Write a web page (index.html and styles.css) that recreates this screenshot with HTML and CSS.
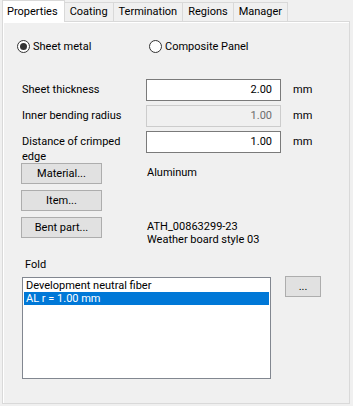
FILE: index.html
```html
<!DOCTYPE html>
<html lang="en">
<head>
    <meta charset="UTF-8">
    <title>Properties</title>
    <link rel="stylesheet" href="styles.css">
</head>
<body>
    <div class="tabs">
        <div class="tab active">Properties</div>
        <div class="tab">Coating</div>
        <div class="tab">Termination</div>
        <div class="tab">Regions</div>
        <div class="tab">Manager</div>
    </div>

    <div class="panel">
        <!-- Type -->
        <div class="radios">
            <label class="radio"><span class="dot checked"></span>Sheet metal</label>
            <label class="radio"><span class="dot"></span>Composite Panel</label>
        </div>

        <!-- Values -->
        <div class="fields">
            <div class="field">
                <span class="label">Sheet thickness</span>
                <input class="num" type="text" value="2.00">
                <span class="unit">mm</span>
            </div>
            <div class="field">
                <span class="label">Inner bending radius</span>
                <input class="num" type="text" value="1.00" disabled>
                <span class="unit">mm</span>
            </div>
            <div class="field">
                <span class="label">Distance of crimped edge</span>
                <input class="num" type="text" value="1.00">
                <span class="unit">mm</span>
            </div>
        </div>

        <div class="buttons">
            <div class="row">
                <button class="btn">Material...</button>
                <span class="info">Aluminum</span>
            </div>
            <div class="row">
                <button class="btn">Item...</button>
            </div>
            <div class="row">
                <button class="btn">Bent part...</button>
                <span class="info">ATH_00863299-23<br>Weather board style 03</span>
            </div>
        </div>

        <div class="fold">
            <div class="fold-title">Fold</div>
            <div class="fold-body">
                <div class="list">
                    <div class="item">Development neutral fiber</div>
                    <div class="item selected">AL r = 1.00 mm</div>
                </div>
                <button class="btn small">...</button>
            </div>
        </div>
    </div>
</body>
</html>
```

FILE: styles.css
```css
/* Basis */
body {
    margin: 0;
    background: #f0f0f0;
    font-family: Roboto, sans-serif;
    font-size: 11px;
    color: #000;
    width: 353px;
    height: 406px;
    overflow: hidden;
}

/* Tabs */
.tabs {
    display: flex;
    padding-left: 2px;
    height: 21px;
    position: relative;
    z-index: 1;
}

.tab {
    margin-top: 2px;
    height: 19px;
    line-height: 18px;
    padding: 0 5px;
    border: 1px solid #d9d9d9;
    border-bottom: none;
    border-left: none;
    background: #f0f0f0;
    box-sizing: border-box;
}

.tab.active {
    margin-top: 0;
    height: 22px;
    padding: 0 6px 0 4px;
    background: #fff;
    border-left: 1px solid #d9d9d9;
    line-height: 21px;
}

.panel {
    margin: 0 3px 2px 2px;
    height: 383px;
    box-sizing: border-box;
    border: 1px solid #d9d9d9;
    box-shadow: inset 1px 1px 0 #fff;
    padding: 14px 0 0 14px;
}

/* Radio */
.radios {
    display: flex;
    height: 20px;
    align-items: center;
}

.radio {
    display: flex;
    align-items: center;
    gap: 3px;
    width: 132px;
}

.dot {
    width: 11px;
    height: 11px;
    border: 1px solid #333;
    border-radius: 50%;
    background: #fff;
    position: relative;
}

.dot.checked::after {
    content: "";
    position: absolute;
    left: 2px;
    top: 2px;
    width: 7px;
    height: 7px;
    border-radius: 50%;
    background: #333;
}

/* Fields */
.fields {
    margin-top: 23px;
    margin-left: 5px;
    display: flex;
    flex-direction: column;
    gap: 4px;
}

.field {
    display: flex;
    align-items: flex-start;
    height: 22px;
}

.label {
    width: 124px;
    line-height: 15px;
    padding-top: 3px;
}

.num {
    width: 135px;
    height: 22px;
    box-sizing: border-box;
    border: 1px solid #7a7a7a;
    background: #fff;
    font: inherit;
    text-align: right;
    padding: 0 8px 1px 0;
    margin: 0;
}

.num:disabled {
    border-color: #ccc;
    background: #f0f0f0;
    color: #6d6d6d;
}

.unit {
    margin-left: 12px;
    padding-top: 4px;
}

/* Buttons */
.buttons {
    margin-top: 10px;
    margin-left: 4px;
    display: flex;
    flex-direction: column;
    gap: 6px;
}

.row {
    display: flex;
    align-items: flex-start;
}

.btn {
    width: 81px;
    height: 21px;
    border: 1px solid #adadad;
    background: #e1e1e1;
    font: inherit;
    color: #000;
    padding: 0;
    margin: 0;
}

.info {
    margin-left: 45px;
    padding-top: 3px;
    line-height: 13px;
}

/* Fold */
.fold {
    margin-top: 11px;
    margin-left: 8px;
}

.fold-title {
    line-height: 15px;
}

.fold-body {
    margin-top: 5px;
    margin-left: -3px;
    display: flex;
    align-items: flex-start;
    gap: 14px;
}

.list {
    width: 249px;
    height: 102px;
    box-sizing: border-box;
    border: 1px solid #828790;
    background: #fff;
    padding: 1px;
}

.item {
    line-height: 13px;
    padding-left: 2px;
}

.item.selected {
    background: #0078d7;
    color: #fff;
}

.btn.small {
    width: 36px;
    margin-top: -1px;
}
```
